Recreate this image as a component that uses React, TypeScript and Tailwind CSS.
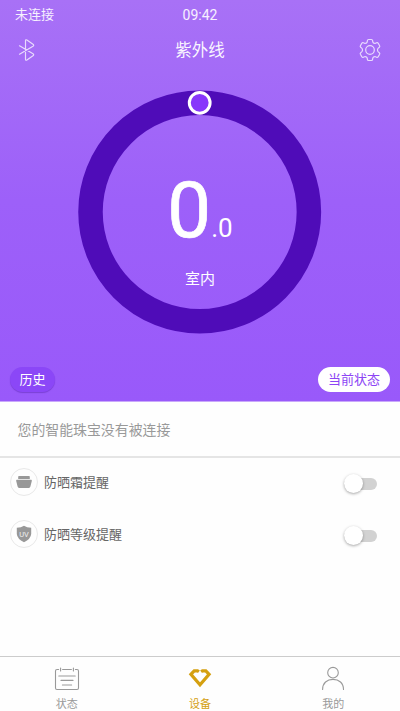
import React, { useState } from 'react';

const BluetoothIcon = () => (
  <svg width="18" height="24" viewBox="0 0 18 24" fill="none" stroke="currentColor" strokeWidth="1.2" strokeLinecap="round" strokeLinejoin="round">
    <path d="M1.5 7.8 L15 15.8 Q16.4 16.8 15 17.8 L8.9 22 Q7.5 22.8 7.5 21 V3 Q7.5 1.2 8.9 2 L15 6.2 Q16.4 7.2 15 8.2 L1.5 16.2" />
  </svg>
);

const GearIcon = () => (
  <svg width="24" height="24" viewBox="0 0 24 24" fill="none" stroke="currentColor" strokeWidth="1.2" strokeLinejoin="round">
    <path d="M9.4 2.6 Q9.5 1.5 10.6 1.5 H13.4 Q14.5 1.5 14.6 2.6 L14.8 3.8 Q15 4.7 15.8 5.1 Q16.6 5.6 17.5 5.2 L18.6 4.7 Q19.6 4.3 20.2 5.3 L21.6 7.7 Q22.1 8.7 21.3 9.3 L20.3 10.1 Q19.5 10.8 19.5 12 Q19.5 13.2 20.3 13.9 L21.3 14.7 Q22.1 15.3 21.6 16.3 L20.2 18.7 Q19.6 19.7 18.6 19.3 L17.5 18.8 Q16.6 18.4 15.8 18.9 Q15 19.3 14.8 20.2 L14.6 21.4 Q14.5 22.5 13.4 22.5 H10.6 Q9.5 22.5 9.4 21.4 L9.2 20.2 Q9 19.3 8.2 18.9 Q7.4 18.4 6.5 18.8 L5.4 19.3 Q4.4 19.7 3.8 18.7 L2.4 16.3 Q1.9 15.3 2.7 14.7 L3.7 13.9 Q4.5 13.2 4.5 12 Q4.5 10.8 3.7 10.1 L2.7 9.3 Q1.9 8.7 2.4 7.7 L3.8 5.3 Q4.4 4.3 5.4 4.7 L6.5 5.2 Q7.4 5.6 8.2 5.1 Q9 4.7 9.2 3.8 Z" />
    <circle cx="12" cy="12" r="4.3" />
  </svg>
);

const CreamIcon = () => (
  <svg width="16" height="12" viewBox="0 0 16 12" fill="#989898">
    <path d="M3 0 H13 Q13.8 0 13.8 0.8 V3 H2.2 V0.8 Q2.2 0 3 0 Z" />
    <path d="M0.8 3.8 H15.2 Q16 3.8 15.8 5 L14.4 10.6 Q14.1 12 12.9 12 H3.1 Q1.9 12 1.6 10.6 L0.2 5 Q0 3.8 0.8 3.8 Z" />
  </svg>
);

const UvIcon = () => (
  <svg width="16" height="18" viewBox="0 0 16 18">
    <path d="M8 0.8 Q10.8 2.8 15.2 2.8 V9 Q14.8 14 8 17.2 Q1.2 14 0.8 9 V2.8 Q5.2 2.8 8 0.8 Z" fill="#989898" />
    <text x="8" y="12" textAnchor="middle" fontFamily="Roboto, sans-serif" fontSize="7.5" fill="#f0f0f0">UV</text>
  </svg>
);

const StatusIcon = () => (
  <svg width="26" height="26" viewBox="0 0 26 26" fill="none" stroke="currentColor" strokeWidth="1.1" strokeLinecap="round">
    <path d="M4.6 3.5 H3 Q1.5 3.5 1.5 5 V22 Q1.5 23.5 3 23.5 H23 Q24.5 23.5 24.5 22 V5 Q24.5 3.5 23 3.5 H21.4 M8.6 3.5 H17.4 M6.6 2 V5 M19.4 2 V5" />
    <path d="M4.8 10 H21.2 M7 14.4 H19 M8.4 19 H17.6" />
  </svg>
);

const DeviceIcon = () => (
  <svg width="24" height="26" viewBox="0 0 24 26" fill="none" stroke="#d5a010" strokeWidth="3.2">
    <path d="M10.9 5.8 L9.5 4.8 H6.2 L2.9 8.3 L12 18.9 L21.1 8.3 L17.8 4.8 H14.5 L13.1 5.8" />
  </svg>
);

const MineIcon = () => (
  <svg width="26" height="26" viewBox="0 0 26 26" fill="none" stroke="currentColor" strokeWidth="1.1" strokeLinecap="round">
    <circle cx="13" cy="6.7" r="5.3" />
    <path d="M2.6 23.4 C2.6 17 7 13.4 13 13.4 C19 13.4 23.5 17 23.5 23.4" />
  </svg>
);

interface ReminderRowProps {
  icon: React.ReactNode;
  label: string;
}

const ReminderRow: React.FC<ReminderRowProps> = ({ icon, label }) => {
  const [enabled, setEnabled] = useState(false);

  return (
    <div className="flex h-[52px] items-center pl-[10px] pr-[23px]">
      <span className="flex h-7 w-7 items-center justify-center rounded-full border border-[#e8e8e8]">{icon}</span>
      <span className="ml-[6px] flex-1 pt-px text-[13px] leading-5 text-[#666]">{label}</span>
      <button
        type="button"
        role="switch"
        aria-checked={enabled}
        aria-label={label}
        onClick={() => setEnabled(!enabled)}
        className="mt-[3px] flex h-5 w-[33px] items-center"
      >
        <span className={enabled
          ? 'flex h-3 w-full items-center justify-end rounded-full bg-[#a777fa]'
          : 'flex h-3 w-full items-center rounded-full bg-[#d2d2d2]'}
        >
          <span className="h-[19px] w-[19px] shrink-0 rounded-full bg-white shadow-[0_1px_3px_rgba(0,0,0,0.35)]" />
        </span>
      </button>
    </div>
  );
};

const tabs = [
  { name: '状态', icon: <StatusIcon />, active: false },
  { name: '设备', icon: <DeviceIcon />, active: true },
  { name: '我的', icon: <MineIcon />, active: false },
];

const App: React.FC = () => {
  return (
    <div className="flex h-[711px] w-[400px] flex-col overflow-hidden bg-[#fefefe] font-[Roboto,'Noto_Sans_CJK_SC',sans-serif]">
      <section className="flex h-[402px] shrink-0 flex-col border-b border-[#c9a8fb] bg-linear-to-b from-[#a871f6] via-[#9d60f9] to-[#9959fa] text-white">
        {/* Status bar */}
        <div className="grid h-[29px] grid-cols-3 items-center px-[15px] text-[13px] leading-5 text-white/90">
          <span>未连接</span>
          <span className="text-center text-[14px]">09:42</span>
        </div>

        {/* Title */}
        <header className="flex h-[42px] items-center justify-between pl-[18px] pr-[18px] text-white/75">
          <span className="flex w-6"><BluetoothIcon /></span>
          <h1 className="pt-[2px] text-[16.5px] leading-6 text-white/95">紫外线</h1>
          <GearIcon />
        </header>

        {/* UV gauge */}
        <div className="mt-[19px] grid h-[244px] place-items-center">
          <svg className="col-start-1 row-start-1" width="244" height="244" viewBox="0 0 244 244" fill="none">
            <circle cx="121.7" cy="122" r="109.2" stroke="#4f0cb8" strokeWidth="24.5" />
            <circle cx="121.7" cy="12.8" r="10.4" fill="#8837fb" stroke="#fff" strokeWidth="3" />
          </svg>
          <div className="col-start-1 row-start-1 flex flex-col items-center pt-[36px]">
            <div className="flex items-baseline">
              <span className="text-[78px] leading-[80px] [-webkit-text-stroke:0.7px_white]">0</span>
              <span className="text-[26px] leading-8">.0</span>
            </div>
            <span className="mt-[18px] text-[15px] leading-5">室内</span>
          </div>
        </div>

        <div className="mt-auto mb-[9px] flex items-center justify-between px-[10px] text-[13px]">
          <button type="button" className="h-[25px] w-[45px] rounded-full bg-[#8b47f7] leading-5 shadow-[0_1px_1px_rgba(70,20,150,0.35)]">历史</button>
          <button type="button" className="h-[25px] w-[72px] rounded-full bg-white leading-5 text-[#8d45f5]">当前状态</button>
        </div>
      </section>

      <p className="flex h-[56px] shrink-0 items-center border-b-2 border-[#e5e5e5] pt-[2px] pl-[17.5px] text-[13.9px] text-[#999]">
        您的智能珠宝没有被连接
      </p>

      <main className="-mt-[2px] flex-1">
        <ReminderRow icon={<CreamIcon />} label="防晒霜提醒" />
        <ReminderRow icon={<UvIcon />} label="防晒等级提醒" />
      </main>

      <nav className="grid h-[55px] shrink-0 grid-cols-3 border-t border-[#ccc] pt-[9px]">
        {tabs.map(tab => (
          <button
            key={tab.name}
            type="button"
            className={tab.active
              ? 'flex flex-col items-center text-[11px] text-[#d5a010]'
              : 'flex flex-col items-center text-[11px] text-[#999]'}
          >
            {tab.icon}
            <span className="mt-[5px] leading-4">{tab.name}</span>
          </button>
        ))}
      </nav>
    </div>
  );
};

export default App;
